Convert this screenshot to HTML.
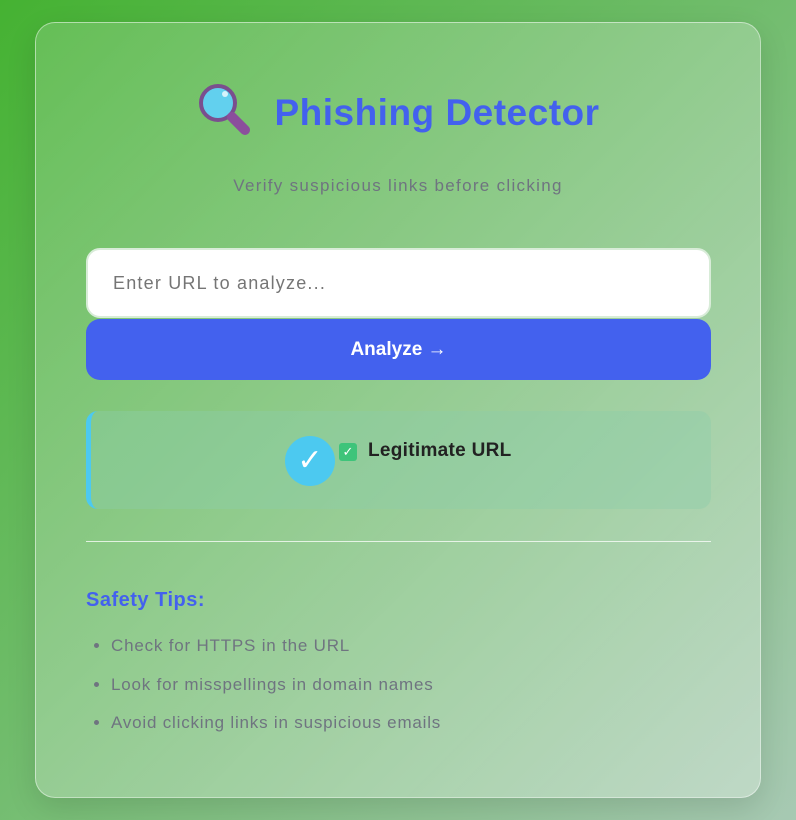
<!DOCTYPE html>
<html><head><meta charset="utf-8"><style>
*{box-sizing:border-box;margin:0;padding:0}
html,body{width:796px;height:820px;overflow:hidden}
body{font-family:"Liberation Sans","DejaVu Sans",sans-serif;background:linear-gradient(135deg,#45b232 0%,#6fbc6a 45%,#a7c9b3 100%);position:relative}
.card{position:absolute;left:35px;top:22px;width:726px;height:776px;border-radius:20px;background:linear-gradient(135deg,rgba(255,255,255,0.16),rgba(255,255,255,0.3));border:1px solid rgba(255,255,255,0.45);box-shadow:0 10px 30px rgba(0,0,0,0.12)}
.title{position:absolute;left:0;right:0;top:58px;text-align:center;font-size:37px;font-weight:bold;color:#4361ee;letter-spacing:0.5px}
.title .ic{display:inline-block;width:56px;height:56px;vertical-align:-12px;margin-right:22px}
.sub{position:absolute;left:0;right:0;top:153px;text-align:center;font-size:17px;color:#6f7480;letter-spacing:1.3px}
.input{position:absolute;left:50px;top:225px;width:625px;height:70px;background:#fff;border:2px solid #d8ecd8;border-radius:14px;padding-left:25px;line-height:66px;font-size:18px;color:#757575;letter-spacing:1.2px}
.btn{position:absolute;left:50px;top:296px;width:625px;height:61px;background:#4361ee;border-radius:14px;color:#fff;font-weight:bold;font-size:19px;text-align:center;line-height:61px}
.res{position:absolute;left:50px;top:388px;width:625px;height:98px;border-radius:12px;background:rgba(140,205,170,0.4);border-left:5px solid #4cc9f0}
.circ{position:absolute;left:194px;top:25px;width:50px;height:50px;border-radius:50%;background:#4cc9f0;color:#fff;font-size:30px;text-align:center;line-height:50px}
.chk{position:absolute;left:248px;top:32px;width:18px;height:18px;border-radius:3px;background:#3ec47a;color:#fff;font-size:13px;text-align:center;line-height:18px}
.lt{position:absolute;left:277px;top:29px;font-size:19px;font-weight:bold;color:#222;letter-spacing:0.3px}
.hr{position:absolute;left:50px;top:518px;width:625px;height:1px;background:rgba(255,255,255,0.75)}
.tips{position:absolute;left:50px;top:566px;font-size:20px;font-weight:bold;color:#4361ee;letter-spacing:0.5px}
ul{position:absolute;left:75px;top:613px;font-size:17px;color:#6f7480;list-style:disc;letter-spacing:0.8px}
li{height:38.5px}
</style></head><body>
<div class="card">
 <div class="title"><svg class="ic" viewBox="0 0 56 56"><circle cx="22" cy="22" r="17" fill="#62d0ee" stroke="#7a4f8e" stroke-width="4"/><circle cx="29" cy="13" r="3" fill="#d6f3fb"/><line x1="36" y1="36" x2="49" y2="49" stroke="#8b4f9c" stroke-width="10" stroke-linecap="round"/></svg>Phishing Detector</div>
 <div class="sub">Verify suspicious links before clicking</div>
 <div class="input">Enter URL to analyze...</div>
 <div class="btn">Analyze →</div>
 <div class="res"><div class="circ">✓</div><div class="chk">✓</div><div class="lt">Legitimate URL</div></div>
 <div class="hr"></div>
 <div class="tips">Safety Tips:</div>
 <ul><li>Check for HTTPS in the URL</li><li>Look for misspellings in domain names</li><li>Avoid clicking links in suspicious emails</li></ul>
</div>
</body></html>
